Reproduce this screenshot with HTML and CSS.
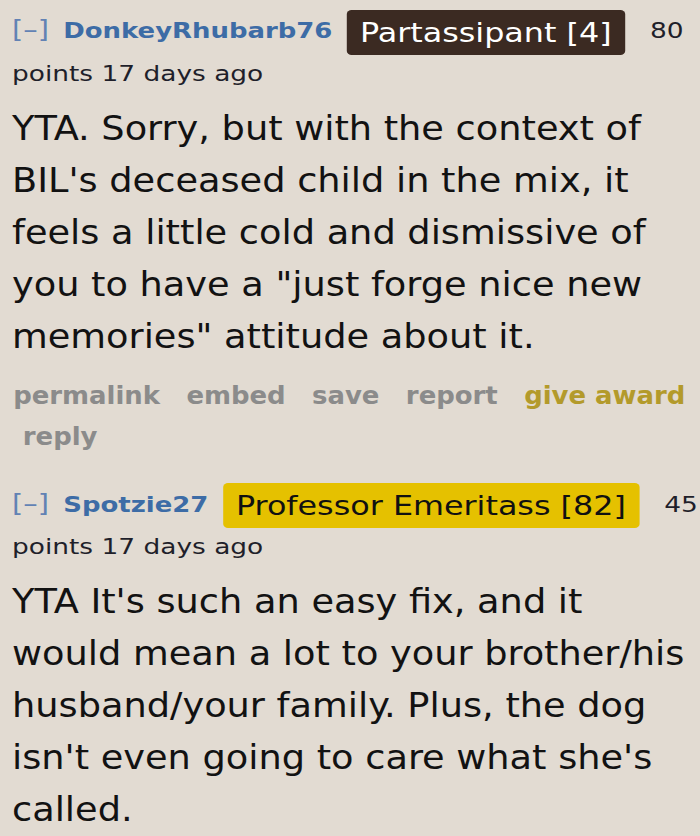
FILE: index.html
```html
<!DOCTYPE html>
<html>
<head>
<meta charset="utf-8">
<link rel="stylesheet" href="styles.css">
</head>
<body>
<div class="thread">
  <div class="comment">
    <p class="tagline"><span class="expand">[–]</span> <span class="author">DonkeyRhubarb76</span> <span class="flair flair-dark">Partassipant [4]</span> <span class="score">80</span> <span class="time">points 17 days ago</span></p>
    <div class="md">
      <p>YTA. Sorry, but with the context of<br>BIL's deceased child in the mix, it<br>feels a little cold and dismissive of<br>you to have a "just forge nice new<br>memories" attitude about it.</p>
    </div>
    <ul class="buttons">
      <li>permalink</li>
      <li>embed</li>
      <li>save</li>
      <li>report</li>
      <li class="award">give award</li>
      <li class="reply">reply</li>
    </ul>
  </div>
  <div class="comment">
    <p class="tagline"><span class="expand">[–]</span> <span class="author">Spotzie27</span> <span class="flair flair-gold">Professor Emeritass [82]</span> <span class="score">45</span> <span class="time">points 17 days ago</span></p>
    <div class="md">
      <p>YTA It's such an easy fix, and it<br>would mean a lot to your brother/his<br>husband/your family. Plus, the dog<br>isn't even going to care what she's<br>called.</p>
    </div>
  </div>
</div>
</body>
</html>
```

FILE: styles.css
```css
html, body {
  margin: 0;
  padding: 0;
  background: #e2dbd2;
  overflow: hidden;
}
.thread {
  width: 583px;
  box-sizing: border-box;
  padding: 10px 0 0 10px;
  transform: scaleX(1.2);
  transform-origin: 0 0;
  font-family: "DejaVu Sans", sans-serif;
  color: #111;
}
.comment + .comment {
  margin-top: 26px;
}
.tagline {
  margin: 0;
  font-size: 22px;
  line-height: 41px;
  color: #1f1f2a;
}
.expand {
  font-size: 24px;
  color: #6282b4;
}
.author {
  font-weight: bold;
  font-size: 21.6px;
  color: #3d6ca6;
  margin-left: 5px;
  margin-right: 5px;
}
.flair {
  display: inline-block;
  font-size: 26.5px;
  line-height: 45px;
  padding: 0 11px;
  margin: -2px 14px -2px 0;
  border-radius: 4px;
  vertical-align: middle;
}
.flair-dark {
  background: #3b2a22;
  color: #ffffff;
}
.flair-gold {
  background: #e5c100;
  color: #111111;
}
.md p {
  margin: 8px 0 0 0;
  font-family: "DejaVu Sans Condensed", "DejaVu Sans", sans-serif;
  font-size: 34px;
  line-height: 52px;
  color: #121212;
  white-space: nowrap;
}
.buttons {
  list-style: none;
  margin: 14px 0 0 0;
  padding: 0 0 0 1px;
  display: flex;
  flex-wrap: wrap;
  column-gap: 22px;
  font-family: "DejaVu Sans Condensed", "DejaVu Sans", sans-serif;
  font-weight: bold;
  font-size: 24px;
  line-height: 41px;
  color: #8b8b8b;
}
.buttons .award {
  color: #b39a2b;
}
.buttons .reply {
  margin-left: 8px;
}
```
